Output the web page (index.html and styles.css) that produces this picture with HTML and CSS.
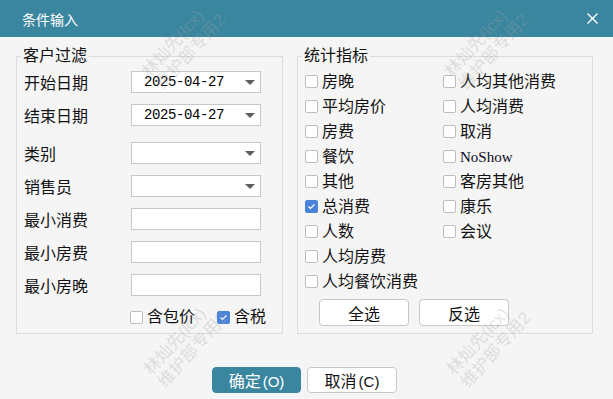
FILE: index.html
```html
<!DOCTYPE html>
<html lang="zh-CN">
<head>
    <meta charset="UTF-8">
    <title>条件输入</title>
    <link rel="stylesheet" href="styles.css">
</head>
<body>
    <div class="dialog">
        <div class="titlebar">
            <span class="title">条件输入</span>
            <svg class="close" width="11" height="11" viewBox="0 0 11 11">
                <path d="M0.5 0.5L10.5 10.5M10.5 0.5L0.5 10.5" stroke="#fff" stroke-width="1.4" fill="none"/>
            </svg>
        </div>

        <div class="content">
            <fieldset class="group group-filter">
                <legend>客户过滤</legend>
                <div class="row">
                    <label>开始日期</label>
                    <div class="field"><span class="date">2025-04-27</span><span class="arrow"></span></div>
                </div>
                <div class="row row-wide">
                    <label>结束日期</label>
                    <div class="field"><span class="date">2025-04-27</span><span class="arrow"></span></div>
                </div>
                <div class="row">
                    <label>类别</label>
                    <div class="field"><span></span><span class="arrow"></span></div>
                </div>
                <div class="row">
                    <label>销售员</label>
                    <div class="field"><span></span><span class="arrow"></span></div>
                </div>
                <div class="row">
                    <label>最小消费</label>
                    <div class="field"></div>
                </div>
                <div class="row">
                    <label>最小房费</label>
                    <div class="field"></div>
                </div>
                <div class="row">
                    <label>最小房晚</label>
                    <div class="field"></div>
                </div>
                <div class="checks">
                    <label class="check"><span class="box"></span>含包价</label>
                    <label class="check"><span class="box checked"><svg width="11" height="11" viewBox="0 0 11 11"><path d="M2.5 5.5L4.5 7.5L8.5 3.5" stroke="#fff" stroke-width="1.2" fill="none"/></svg></span>含税</label>
                </div>
            </fieldset>

            <fieldset class="group group-stats">
                <legend>统计指标</legend>
                <div class="stat-grid">
                    <label class="check"><span class="box"></span>房晚</label>
                    <label class="check"><span class="box"></span>平均房价</label>
                    <label class="check"><span class="box"></span>房费</label>
                    <label class="check"><span class="box"></span>餐饮</label>
                    <label class="check"><span class="box"></span>其他</label>
                    <label class="check"><span class="box checked"><svg width="11" height="11" viewBox="0 0 11 11"><path d="M2.5 5.5L4.5 7.5L8.5 3.5" stroke="#fff" stroke-width="1.2" fill="none"/></svg></span>总消费</label>
                    <label class="check"><span class="box"></span>人数</label>
                    <label class="check"><span class="box"></span>人均房费</label>
                    <label class="check"><span class="box"></span>人均餐饮消费</label>
                    <label class="check"><span class="box"></span>人均其他消费</label>
                    <label class="check"><span class="box"></span>人均消费</label>
                    <label class="check"><span class="box"></span>取消</label>
                    <label class="check"><span class="box"></span><span class="latin">NoShow</span></label>
                    <label class="check"><span class="box"></span>客房其他</label>
                    <label class="check"><span class="box"></span>康乐</label>
                    <label class="check"><span class="box"></span>会议</label>
                </div>
                <div class="stat-buttons">
                    <button class="btn">全选</button>
                    <button class="btn">反选</button>
                </div>
            </fieldset>
        </div>

        <div class="footer">
            <button class="btn btn-primary">确定<span class="key">(O)</span></button>
            <button class="btn btn-cancel">取消<span class="key">(C)</span></button>
        </div>

        <!-- watermark tiles -->
        <div class="watermark">
            <div class="wm wm-1">林灿先(lcx)<br>维护部专用2</div>
            <div class="wm wm-2">林灿先(lcx)<br>维护部专用2</div>
            <div class="wm wm-3">林灿先(lcx)<br>维护部专用2</div>
            <div class="wm wm-4">林灿先(lcx)<br>维护部专用2</div>
        </div>
    </div>
</body>
</html>
```

FILE: styles.css
```css
body {
    margin: 0;
    font-family: "Liberation Sans", "Noto Sans CJK SC", sans-serif;
    color: #111;
}
.dialog {
    position: relative;
    width: 613px;
    height: 399px;
    background: #f5f5f5;
    overflow: hidden;
}
.titlebar {
    height: 37px;
    background: #3b869f;
    color: #fff;
    display: flex;
    align-items: center;
    justify-content: space-between;
    padding: 0 15px 0 22px;
    font-size: 14px;
}
.close {
    display: block;
}
.content {
    display: flex;
    gap: 14px;
    padding: 9px 0 0 16px;
}
.group {
    margin: 0;
    height: 288px;
    box-sizing: border-box;
    border: 1px solid #dcdcdc;
    padding: 5px 0 0 7px;
    min-width: 0;
}
.group legend {
    font-size: 16px;
    line-height: 20px;
    padding: 0 2px;
    margin-left: -3px;
}
.group-filter {
    width: 267px;
}
.group-stats {
    width: 296px;
    padding-top: 3px;
}
.row {
    display: flex;
    align-items: center;
    height: 22px;
    margin-bottom: 11px;
}
.row-wide {
    margin-bottom: 16px;
}
.row label {
    width: 107px;
    font-size: 16px;
}
.field {
    width: 130px;
    height: 22px;
    box-sizing: border-box;
    border: 1px solid #c8c8c8;
    background: #fff;
    display: flex;
    align-items: center;
    justify-content: space-between;
    padding: 0 5px 0 12px;
}
.date {
    font-family: "Liberation Mono", monospace;
    font-size: 14px;
    letter-spacing: -0.4px;
    color: #000;
}
.arrow {
    width: 0;
    height: 0;
    border-left: 5px solid transparent;
    border-right: 5px solid transparent;
    border-top: 5px solid #5a6058;
}
.checks {
    display: flex;
    gap: 22px;
    margin-top: 3px;
    padding-left: 106px;
}
.check {
    display: flex;
    align-items: center;
    gap: 4px;
    font-size: 16px;
    line-height: 20px;
    white-space: nowrap;
}
.box {
    width: 13px;
    height: 13px;
    box-sizing: border-box;
    border: 1px solid #bdbdbd;
    border-radius: 2px;
    background: #fff;
    display: flex;
    align-items: center;
    justify-content: center;
}
.box.checked {
    background: #4a84d8;
    border-color: #4a84d8;
}
.latin {
    font-family: "Liberation Serif", serif;
    font-size: 15px;
    color: #0a0a20;
}
.stat-grid {
    display: grid;
    grid-auto-flow: column;
    grid-template-rows: repeat(9, 25px);
    grid-template-columns: 138px auto;
    align-items: center;
}
.stat-buttons {
    display: flex;
    gap: 10px;
    margin: 5px 0 0 14px;
}
.btn {
    width: 90px;
    height: 27px;
    padding: 0;
    border: 1px solid #c8c8c8;
    border-radius: 4px;
    background: #fff;
    color: #111;
    font-family: inherit;
    font-size: 16px;
}
.key {
    margin-left: 2px;
    font-size: 15px;
}
.footer {
    display: flex;
    justify-content: center;
    gap: 6px;
    margin-top: 33px;
    padding-right: 4px;
}
.footer .btn {
    height: 26px;
}
.btn-primary {
    width: 89px;
    background: #3b869f;
    border-color: #3b869f;
    color: #fff;
}
.watermark {
    position: absolute;
    top: 0;
    left: 0;
    right: 0;
    bottom: 0;
    pointer-events: none;
}
.wm {
    position: absolute;
    transform: rotate(-48deg);
    transform-origin: 0 0;
    font-family: "Liberation Sans", "Noto Sans CJK SC", sans-serif;
    font-size: 17px;
    line-height: 19px;
    white-space: nowrap;
    color: rgba(160, 160, 160, 0.3);
}
.wm-1 { left: 138px; top: 68px; }
.wm-2 { left: 441px; top: 68px; }
.wm-3 { left: 140px; top: 366px; }
.wm-4 { left: 443px; top: 366px; }
```
